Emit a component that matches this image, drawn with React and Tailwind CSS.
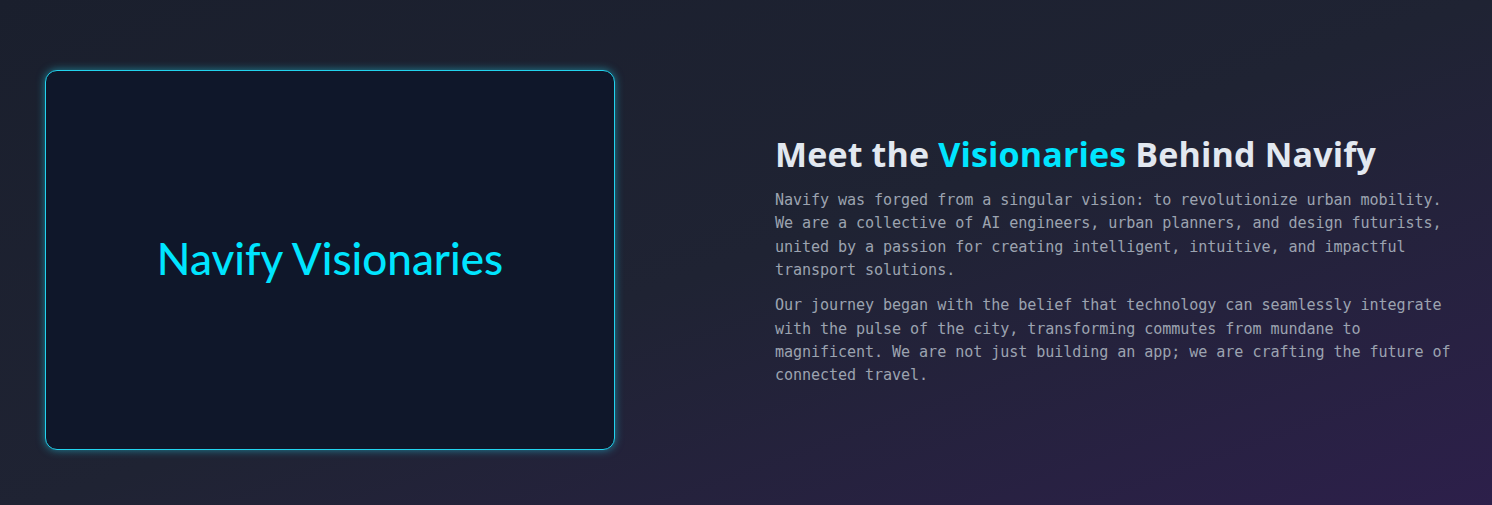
import React from 'react';

export default function App() {
  return (
    <div className="min-h-[505px] w-full bg-gradient-to-br from-[#1a1f2d] via-[#1f2333] to-[#2d1f4b] flex items-center pl-[45px] py-[70px]">
      {/* Image placeholder card */}
      <div className="w-[570px] h-[380px] shrink-0 rounded-xl border border-[#22d3ee] bg-[#0f172a] shadow-[0_0_8px_rgba(34,211,238,0.55)] flex items-center justify-center">
        <span className="text-[44px] font-medium text-[#00e5ff] font-['Lato',sans-serif] pb-[4px]">Navify Visionaries</span>
      </div>

      {/* About text */}
      <div className="ml-[160px] w-[688px] shrink-0">
        <h2 className="text-[34px] leading-tight font-bold text-[#e2e8f0] font-['Open_Sans',sans-serif] tracking-[0.15px] mb-[14px]">
          Meet the <span className="text-[#00e5ff]">Visionaries</span> Behind Navify
        </h2>
        <p className="text-[15.1px] leading-[23.3px] text-[#9ca3b0] font-['DejaVu_Sans_Mono',monospace] tracking-[-0.08px]">
          Navify was forged from a singular vision: to revolutionize urban mobility. We are a collective of AI engineers, urban planners, and design futurists, united by a passion for creating intelligent, intuitive, and impactful transport solutions.
        </p>
        <p className="mt-[12px] text-[15.1px] leading-[23.3px] text-[#9ca3b0] font-['DejaVu_Sans_Mono',monospace] tracking-[-0.08px]">
          Our journey began with the belief that technology can seamlessly integrate with the pulse of the city, transforming commutes from mundane to magnificent. We are not just building an app; we are crafting the future of connected travel.
        </p>
      </div>
    </div>
  );
}
